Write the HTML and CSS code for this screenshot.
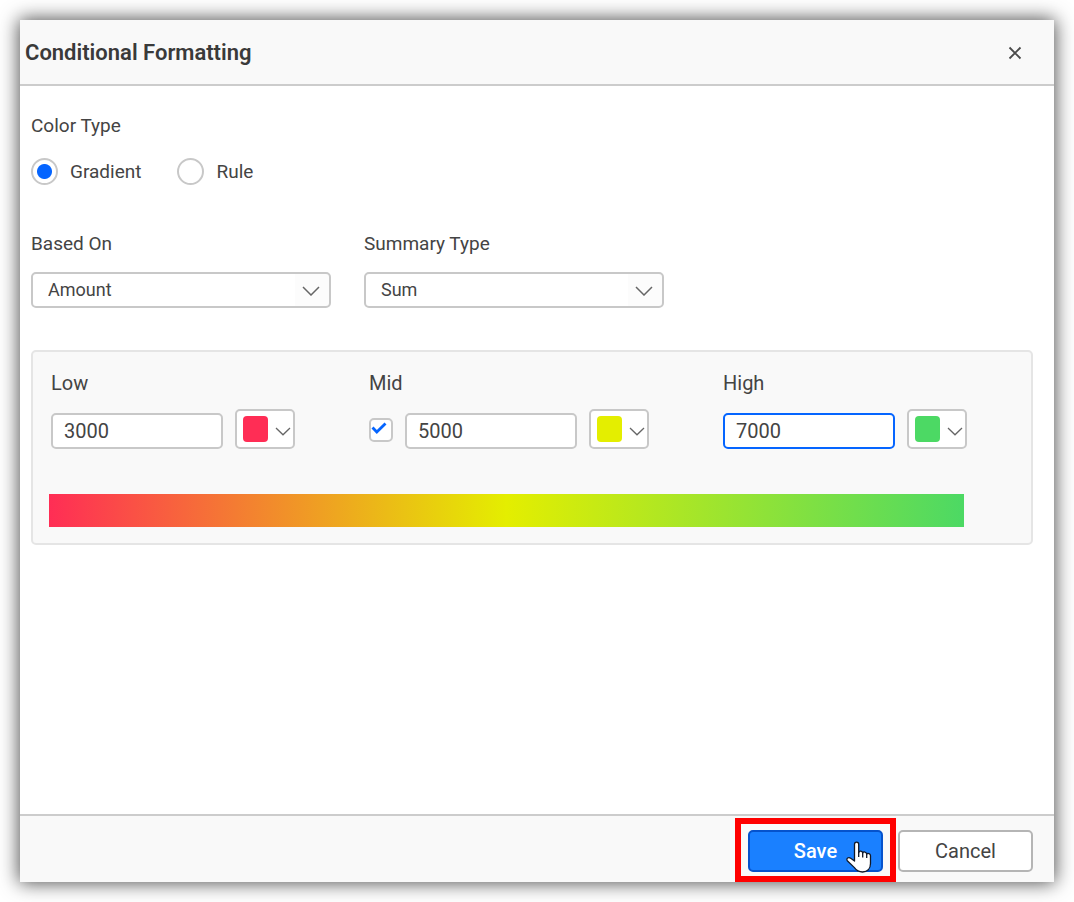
FILE: index.html
```html
<!DOCTYPE html>
<html lang="en">
<head>
<meta charset="utf-8">
<title>Conditional Formatting</title>
<link rel="stylesheet" href="styles.css">
</head>
<body>
<main class="dialog" role="dialog" aria-labelledby="dialog-title">
  <header class="dialog-header">
    <h1 class="dialog-title" id="dialog-title">Conditional Formatting</h1>
    <button class="close" type="button" aria-label="Close">
      <svg width="14" height="14" viewBox="0 0 14 14"><path d="M1.5 1.5l11 11M12.5 1.5l-11 11" fill="none" stroke="#4a4a4a" stroke-width="1.8"/></svg>
    </button>
  </header>

  <form class="dialog-body">
    <fieldset class="color-type">
      <legend class="label">Color Type</legend>
      <div class="radios">
        <label class="radio-option"><input class="radio" type="radio" name="type" checked>Gradient</label>
        <label class="radio-option"><input class="radio" type="radio" name="type">Rule</label>
      </div>
    </fieldset>

    <div class="selects">
      <div class="select-field">
        <label class="label" for="based-on">Based On</label>
        <div class="select-box">
          <select class="select" id="based-on"><option>Amount</option></select>
          <svg class="select-arrow" width="18" height="10" viewBox="0 0 18 10"><path d="M1 1l8 8 8-8" fill="none" stroke="#666" stroke-width="1.5"/></svg>
        </div>
      </div>
      <div class="select-field">
        <label class="label" for="summary-type">Summary Type</label>
        <div class="select-box">
          <select class="select" id="summary-type"><option>Sum</option></select>
          <svg class="select-arrow" width="18" height="10" viewBox="0 0 18 10"><path d="M1 1l8 8 8-8" fill="none" stroke="#666" stroke-width="1.5"/></svg>
        </div>
      </div>
    </div>

    <section class="panel">
      <div class="stops">
        <div class="stop">
          <label class="stop-label" for="low">Low</label>
          <div class="stop-controls">
            <input class="value" id="low" type="text" value="3000">
            <button class="picker" type="button" aria-label="Low color">
              <span class="swatch swatch-low"></span>
              <svg width="16" height="9" viewBox="0 0 16 9"><path d="M1 1l7 6.8 7-6.8" fill="none" stroke="#666" stroke-width="1.3"/></svg>
            </button>
          </div>
        </div>
        <div class="stop">
          <label class="stop-label" for="mid">Mid</label>
          <div class="stop-controls">
            <span class="check-box">
              <input class="check" type="checkbox" aria-label="Use mid value" checked>
              <svg class="check-mark" width="16" height="12" viewBox="0 0 16 12"><path d="M1.5 5.5l4.3 4.5L14.5 1.5" fill="none" stroke="#0565ff" stroke-width="2.8"/></svg>
            </span>
            <input class="value" id="mid" type="text" value="5000">
            <button class="picker" type="button" aria-label="Mid color">
              <span class="swatch swatch-mid"></span>
              <svg width="16" height="9" viewBox="0 0 16 9"><path d="M1 1l7 6.8 7-6.8" fill="none" stroke="#666" stroke-width="1.3"/></svg>
            </button>
          </div>
        </div>
        <div class="stop">
          <label class="stop-label" for="high">High</label>
          <div class="stop-controls">
            <input class="value value-active" id="high" type="text" value="7000">
            <button class="picker" type="button" aria-label="High color">
              <span class="swatch swatch-high"></span>
              <svg width="16" height="9" viewBox="0 0 16 9"><path d="M1 1l7 6.8 7-6.8" fill="none" stroke="#666" stroke-width="1.3"/></svg>
            </button>
          </div>
        </div>
      </div>
      <div class="gradient"></div>
    </section>
  </form>

  <footer class="dialog-footer">
    <div class="save-box">
      <button class="button button-primary" type="button">Save</button>
      <span class="highlight"></span>
      <svg class="pointer" width="26" height="32" viewBox="0 0 26 32"><path d="M8.5 20V3.2C8.5 .3 12.700 .3 12.700 3.2V11.5C13.2 9.4 16.600 9.6 16.700 12C17.400 10.3 20.600 10.7 20.700 13.1C21.600 11.9 24.500 12.5 24.500 14.8V22.5C24.500 28 21 31 16.500 31C12.500 31 10.400 29.3 8.200 26.4L1.300 19.700C-.2 17.400 2.600 15.800 4.700 17.300Z" fill="#fff" stroke="#111827" stroke-width="1.3" stroke-linejoin="round"/><path d="M12.7 11v5M16.7 12v4.5M20.7 13v4" fill="none" stroke="#111827" stroke-width="1.3"/></svg>
    </div>
    <button class="button" type="button">Cancel</button>
  </footer>
</main>
</body>
</html>
```
FILE: styles.css
```css
* {
  box-sizing: border-box;
}

body {
  margin: 0;
  padding: 20px;
  background: #fff;
  color: #444;
  font-family: Roboto, "Liberation Sans", sans-serif;
  font-size: 18px;
  line-height: 24px;
}

input,
select,
button {
  margin: 0;
  color: inherit;
  font: inherit;
}

svg {
  display: block;
  flex: none;
}

.dialog {
  display: flex;
  flex-direction: column;
  min-height: calc(100vh - 40px);
  background: #fff;
  box-shadow: 0 0 18px 1px rgba(0, 0, 0, 0.7);
}

.dialog-header {
  display: flex;
  align-items: center;
  justify-content: space-between;
  padding: 21px 32px 19px 5px;
  border-bottom: 2px solid #ccc;
  background: #f9f9f9;
}

.dialog-title {
  margin: 0;
  color: #3a3a3a;
  font-size: 22px;
  font-weight: 600;
  line-height: 24px;
}

.close {
  padding: 0;
  border: 0;
  background: none;
}

.dialog-body {
  flex: 1;
  padding: 28px 21px 28px 11px;
}

.color-type {
  margin: 0;
  padding: 0;
  border: 0;
}

.label {
  display: block;
  padding: 0;
  font-size: 19px;
}

.radios {
  display: flex;
  gap: 36px;
  padding-top: 20px;
}

.radio-option {
  display: flex;
  align-items: center;
  gap: 12px;
  font-size: 19px;
}

.radio {
  flex: none;
  width: 27px;
  height: 27px;
  border: 2px solid #c8c8c8;
  border-radius: 50%;
  background: #fff;
  appearance: none;
}

.radio:checked {
  background: radial-gradient(circle, #0565ff 7px, #fff 8px);
}

.selects {
  display: flex;
  gap: 33px;
  margin-top: 47px;
}

.select-field {
  width: 300px;
}

.select-box {
  position: relative;
  margin-top: 16px;
}

.select {
  display: block;
  width: 100%;
  height: 36px;
  padding: 0 40px 0 15px;
  border: 2px solid #c8c8c8;
  border-radius: 5px;
  background: linear-gradient(#fcfcfc, #fcfcfc) right / 34px 100% no-repeat #fff;
  appearance: none;
}

.select-arrow {
  position: absolute;
  top: 14px;
  right: 11px;
  pointer-events: none;
}

.panel {
  margin-top: 42px;
  padding: 19px 67px 16px 16px;
  border: 2px solid #e5e5e5;
  border-radius: 5px;
  background: #f9f9f9;
}

.stops {
  display: flex;
  gap: 74px;
  padding-left: 2px;
}

.stop-label {
  display: block;
  font-size: 20px;
}

.stop-controls {
  display: flex;
  align-items: flex-end;
  gap: 12px;
  margin-top: 14px;
}

.value {
  width: 172px;
  height: 36px;
  padding: 0 11px 1px;
  border: 2px solid #c8c8c8;
  border-radius: 5px;
  background: #fff;
  font-size: 20px;
}

.value-active {
  border-color: #0565ff;
}

.picker {
  display: flex;
  align-items: center;
  gap: 7px;
  width: 60px;
  height: 40px;
  padding: 0 0 0 6px;
  border: 2px solid #c8c8c8;
  border-radius: 5px;
  background: #fff;
}

.picker svg {
  margin-top: 4px;
}

.swatch {
  flex: none;
  width: 25px;
  height: 26px;
  border-radius: 4px;
}

.swatch-low {
  background: #ff2d55;
}

.swatch-mid {
  background: #e4ee00;
}

.swatch-high {
  background: #4cd964;
}

.check-box {
  position: relative;
  margin-bottom: 7px;
}

.check {
  display: block;
  width: 24px;
  height: 24px;
  border: 2px solid #c8c8c8;
  border-radius: 5px;
  background: #fff;
  appearance: none;
}

.check-mark {
  position: absolute;
  top: 4px;
  left: 2px;
  pointer-events: none;
}

.gradient {
  height: 33px;
  margin-top: 45px;
  background: linear-gradient(to right, #ff2d55, #e4ee00 50%, #4cd964);
}

.dialog-footer {
  display: flex;
  justify-content: flex-end;
  gap: 15px;
  padding: 14px 21px 10px;
  border-top: 2px solid #ccc;
  background: #f9f9f9;
}

.save-box {
  position: relative;
}

.button {
  display: block;
  width: 135px;
  height: 42px;
  padding: 0;
  border: 2px solid #b5b5b5;
  border-radius: 5px;
  background: #fff;
  font-size: 20px;
}

.button-primary {
  border-color: #0552cc;
  background: #1a80ff;
  color: #fff;
  font-weight: 500;
}

.highlight {
  position: absolute;
  inset: -12px -13px -10px;
  border: 6px solid #f00;
  pointer-events: none;
}

.pointer {
  position: absolute;
  right: 11px;
  bottom: -1px;
  pointer-events: none;
}
```
